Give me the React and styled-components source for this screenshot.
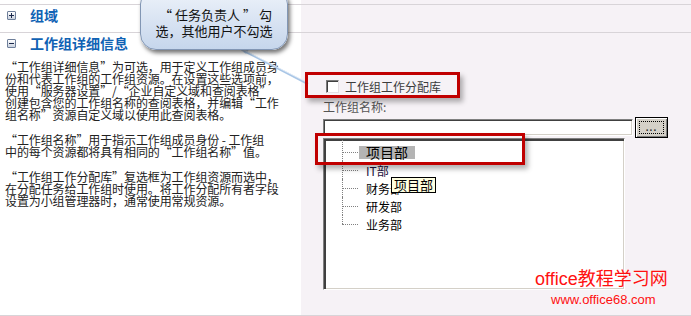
import styled, { createGlobalStyle } from 'styled-components'

const GlobalStyle = createGlobalStyle`
  html, body {
    margin: 0;
    padding: 0;
    background: #ffffff;
  }
  body {
    font-family: "Noto Sans CJK SC", "Liberation Sans", sans-serif;
    font-size: 12px;
    color: #222;
  }
`

const Page = styled.div`
  position: relative;
  width: 691px;
  height: 316px;
  display: flex;
  flex-direction: column;
  overflow: hidden;
`

const Row = styled.div`
  display: grid;
  grid-template-columns: 301px 1fr;
  height: ${p => p.$height ? `${p.$height}px` : 'auto'};
  flex: ${p => p.$grow ? 1 : 'none'};
  border-top: ${p => p.$line ? '1px solid #d8d4d8' : 'none'};
  border-bottom: ${p => p.$bottom ? '1px solid #d8d4d8' : 'none'};
`

const LeftCell = styled.div`
  background: #ffffff;
  padding: 0 5px;
`

const RightCell = styled.div`
  background: #f6f2f6;
`

const Header = styled.div`
  display: flex;
  align-items: center;
  height: 20px;
  gap: 14px;
  padding-left: 2px;
`

const ToggleBox = styled.span`
  position: relative;
  width: 7px;
  height: 7px;
  border: 1px solid #6e7f9a;
  border-radius: 1px;
  background: linear-gradient(#ffffff, #c9d1de);
  &::before {
    content: '';
    position: absolute;
    left: 1px;
    top: 3px;
    width: 5px;
    height: 1px;
    background: #1c2a4c;
  }
  &::after {
    content: '';
    display: ${p => p.$open ? 'none' : 'block'};
    position: absolute;
    left: 3px;
    top: 1px;
    width: 1px;
    height: 5px;
    background: #1c2a4c;
  }
`

const HeaderText = styled.span`
  font-size: 14px;
  font-weight: bold;
  color: #1062b4;
  line-height: 20px;
`

const Body = styled.div`
  margin-top: 8px;
`

const Para = styled.p`
  margin: 0 0 13px;
  font-size: 12px;
  line-height: 12px;
  color: #222;
  white-space: nowrap;
  letter-spacing: -0.1px;
`

const Form = styled.div`
  padding: 45px 0 0 22px;
`

const CheckRow = styled.label`
  display: flex;
  align-items: center;
  height: 16px;
  gap: 6px;
  padding-left: 3px;
  font-size: 12px;
  color: #3c3c3c;
`

const CheckBox = styled.span`
  width: 11px;
  height: 11px;
  background: #fff;
  border-top: 1px solid #7a7a7a;
  border-left: 1px solid #7a7a7a;
  border-right: 1px solid #e4e0e4;
  border-bottom: 1px solid #e4e0e4;
  box-shadow: inset 1px 1px 0 #404040;
`

const FieldLabel = styled.div`
  margin-top: 6px;
  font-size: 12px;
  line-height: 14px;
  color: #555;
`

const InputRow = styled.div`
  display: flex;
  align-items: flex-start;
  gap: 2px;
  margin-top: 3px;
`

const TextInput = styled.div`
  margin-top: 2px;
  width: 310px;
  height: 17px;
  box-sizing: border-box;
  background: #fff;
  border-top: 1px solid #808080;
  border-left: 1px solid #808080;
  border-right: 1px solid #ffffff;
  border-bottom: 1px solid #ffffff;
  box-shadow: inset 1px 1px 0 #404040, inset -1px -1px 0 #d4d0c8;
`

const BrowseButton = styled.div`
  width: 33px;
  height: 21px;
  box-sizing: border-box;
  border: 1px solid #000;
  background: #d4d0c8;
  box-shadow: inset 1px 1px 0 #ffffff, inset -1px -1px 0 #808080;
  padding: 3px;
`

const FocusRing = styled.div`
  height: 100%;
  box-sizing: border-box;
  border: 1px dotted #000;
  display: flex;
  align-items: flex-end;
  justify-content: center;
  font-family: "Liberation Sans", sans-serif;
  font-size: 10px;
  line-height: 10px;
  font-weight: bold;
  color: #333;
  letter-spacing: 1px;
`

const TreeBox = styled.div`
  width: 302px;
  height: 152px;
  box-sizing: border-box;
  background: #fff;
  border-top: 1px solid #808080;
  border-left: 1px solid #808080;
  border-right: 1px solid #ffffff;
  border-bottom: 1px solid #ffffff;
  box-shadow: inset 2px 2px 0 #404040, inset -1px -1px 0 #d4d0c8;
  padding: 4px 0 0 18px;
`

const TreeItem = styled.div`
  position: relative;
  height: 18px;
  display: flex;
  align-items: center;
  padding-left: 17px;
  font-size: 12px;
  color: #000;
  &::before {
    content: '';
    position: absolute;
    left: 0;
    top: 9px;
    width: 16px;
    border-top: 1px dotted #808080;
  }
  &::after {
    content: '';
    position: absolute;
    left: 0;
    top: ${p => p.$first ? '-3px' : '0'};
    height: ${p => p.$last ? '9px' : p.$first ? '21px' : '18px'};
    border-left: 1px dotted #808080;
  }
`

const ItemLabel = styled.span`
  display: inline-block;
  line-height: 13px;
  font-size: ${p => p.$selected ? '14px' : '12px'};
  padding: 0 7px;
  background: ${p => p.$selected ? '#b4b4b4' : 'transparent'};
  color: ${p => p.$color || '#000'};
`

const Callout = styled.div`
  position: absolute;
  left: 140px;
  top: -12px;
  width: 148px;
  height: 62px;
  box-sizing: border-box;
  border-radius: 16px;
  border: 1px solid #8296b4;
  background: linear-gradient(#eef3fa, #c6d6ec);
  box-shadow: 2px 3px 4px rgba(0, 0, 0, 0.55);
  padding-top: 18px;
  text-align: center;
  font-size: 13px;
  line-height: 16px;
  color: #111;
`

const WideQuote = styled.span`
  padding: 0 3px;
`

const Pointer = styled.svg`
  position: absolute;
  left: 230px;
  top: 40px;
  overflow: visible;
`

const RedBox = styled.div`
  position: absolute;
  left: ${p => p.$x}px;
  top: ${p => p.$y}px;
  width: ${p => p.$w}px;
  height: ${p => p.$h}px;
  box-sizing: border-box;
  border: 3px solid #c00000;
  box-shadow: 3px 4px 5px rgba(0, 0, 0, 0.3);
`

const Tooltip = styled.div`
  position: absolute;
  left: 391px;
  top: 177px;
  height: 16px;
  box-sizing: border-box;
  padding: 0 2px;
  border: 1px solid #000;
  background: #ffffe1;
  font-size: 13px;
  line-height: 14px;
  color: #000;
`

const Watermark = styled.div`
  position: absolute;
  left: 535px;
  top: 269px;
  display: flex;
  flex-direction: column;
  align-items: center;
  color: #ff1010;
  font-family: "Liberation Sans", "Noto Sans CJK SC", sans-serif;
`

const MarkTitle = styled.div`
  font-size: 18px;
  line-height: 20px;
`

const MarkUrl = styled.div`
  font-size: 13px;
  line-height: 16px;
  margin-top: 3px;
  padding-left: 4px;
`

const items = ['项目部', 'IT部', '财务部', '研发部', '业务部']

function App() {
  return (
    <>
      <GlobalStyle />
      <Page>
        <Row $height={4}>
          <LeftCell />
          <RightCell />
        </Row>
        <Row $line $height={27}>
          <LeftCell>
            <Header>
              <ToggleBox />
              <HeaderText>组域</HeaderText>
            </Header>
          </LeftCell>
          <RightCell />
        </Row>
        <Row $line $grow $bottom>
          <LeftCell>
            <Header>
              <ToggleBox $open />
              <HeaderText>工作组详细信息</HeaderText>
            </Header>
            <Body>
              <Para>
                “工作组详细信息”为可选，用于定义工作组成员身<br />
                份和代表工作组的工作组资源。在设置这些选项前，<br />
                使用“服务器设置”/“企业自定义域和查阅表格”<br />
                创建包含您的工作组名称的查阅表格，并编辑“工作<br />
                组名称”资源自定义域以使用此查阅表格。
              </Para>
              <Para>
                “工作组名称”用于指示工作组成员身份 - 工作组<br />
                中的每个资源都将具有相同的“工作组名称”值。
              </Para>
              <Para>
                “工作组工作分配库”复选框为工作组资源而选中，<br />
                在分配任务给工作组时使用。将工作分配所有者字段<br />
                设置为小组管理器时，通常使用常规资源。
              </Para>
            </Body>
          </LeftCell>
          <RightCell>
            <Form>
              <CheckRow>
                <CheckBox />
                工作组工作分配库
              </CheckRow>
              <FieldLabel>工作组名称:</FieldLabel>
              <InputRow>
                <TextInput />
                <BrowseButton>
                  <FocusRing>...</FocusRing>
                </BrowseButton>
              </InputRow>
              <TreeBox>
                {items.map((name, i) => (
                  <TreeItem key={name} $first={i === 0} $last={i === items.length - 1}>
                    <ItemLabel $selected={i === 0} $color={i === 1 ? '#1a1040' : undefined}>
                      {name}
                    </ItemLabel>
                  </TreeItem>
                ))}
              </TreeBox>
            </Form>
          </RightCell>
        </Row>

        <Pointer width="90" height="50" viewBox="0 0 90 50">
          <path d="M8 8 L16 14 L20 8 Z" fill="#c6d6ec" />
          <line x1="14" y1="11" x2="78" y2="44" stroke="#a9c6e6" strokeWidth="2" />
          <line x1="14" y1="10" x2="78" y2="43" stroke="#e4eef8" strokeWidth="0.8" />
        </Pointer>
        <Callout>
          <WideQuote>“</WideQuote>任务负责人<WideQuote>”</WideQuote>勾<br />
          选，其他用户不勾选
        </Callout>
        <RedBox $x={305} $y={72} $w={155} $h={26} />
        <RedBox $x={315} $y={133} $w={210} $h={32} />
        <Tooltip>项目部</Tooltip>
        <Watermark>
          <MarkTitle>office教程学习网</MarkTitle>
          <MarkUrl>www.office68.com</MarkUrl>
        </Watermark>
      </Page>
    </>
  )
}

export default App
